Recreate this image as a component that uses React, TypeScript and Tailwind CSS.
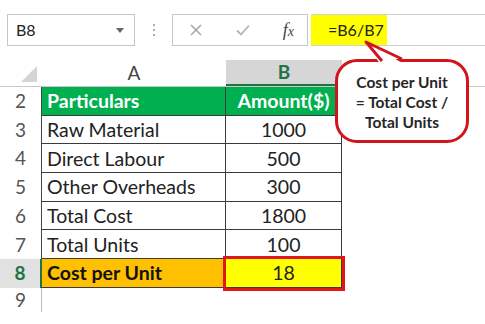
import React from 'react';

const rows = [
  { n: 2, label: 'Particulars', value: 'Amount($)', kind: 'head' },
  { n: 3, label: 'Raw Material', value: '1000', kind: 'body' },
  { n: 4, label: 'Direct Labour', value: '500', kind: 'body' },
  { n: 5, label: 'Other Overheads', value: '300', kind: 'body' },
  { n: 6, label: 'Total Cost', value: '1800', kind: 'body' },
  { n: 7, label: 'Total Units', value: '100', kind: 'body' },
  { n: 8, label: 'Cost per Unit', value: '18', kind: 'result' },
];

function TopBar() {
  return (
    <div className="flex h-[32px] mt-[14px] items-stretch">
      {/* Name box */}
      <div className="ml-[7px] w-[128px] border border-[#c6c6c6] flex items-center justify-between pl-[8px] pr-[10px] text-[16px] text-[#222]">
        <span>B8</span>
        <span className="w-0 h-0 border-l-[4px] border-r-[4px] border-t-[5px] border-l-transparent border-r-transparent border-t-[#666]" />
      </div>
      <div className="w-[37px] flex flex-col items-center justify-center gap-[3px]">
        <span className="w-[2px] h-[2px] bg-[#aaa]" />
        <span className="w-[2px] h-[2px] bg-[#aaa]" />
        <span className="w-[2px] h-[2px] bg-[#aaa]" />
      </div>
      {/* Cancel / enter / fx */}
      <div className="w-[136px] border border-[#c6c6c6] flex items-center pl-[16px] pr-[13px] justify-between">
        <svg width="14" height="14" viewBox="0 0 14 14">
          <path d="M2 2L12 12M12 2L2 12" stroke="#a8a8a8" strokeWidth="1.6" />
        </svg>
        <svg width="16" height="14" viewBox="0 0 16 14">
          <path d="M2 7.5L6 11.5L14 2.5" stroke="#b4b4b4" strokeWidth="1.8" fill="none" />
        </svg>
        <span className="font-['Liberation_Serif'] italic text-[18px] text-[#444] leading-none">
          f<span className="text-[14px]">x</span>
        </span>
      </div>
      {/* Formula input */}
      <div className="flex-1 ml-[3px] border-y border-[#d0d0d0] flex items-stretch">
        <div className="w-[76px] bg-[#ffff00] flex items-center pl-[17px] text-[16px] text-[#222]">=B6/B7</div>
      </div>
    </div>
  );
}

function HeaderRow() {
  return (
    <div className="flex h-[27px] mt-[14px] border-b border-[#c8c8c8]">
      <div className="w-[42px] relative">
        <svg width="16" height="16" viewBox="0 0 16 16" className="absolute right-[5px] bottom-[4px]">
          <polygon points="16,0 16,16 0,16" fill="#d4d4d4" />
        </svg>
      </div>
      <div className="w-[184px] flex items-center justify-center text-[19px] text-[#444]">A</div>
      <div className="w-[116px] bg-[#d6d6d6] border-b-2 border-[#217346] flex items-center justify-center text-[19px] font-bold text-[#217346]">
        B
      </div>
    </div>
  );
}

function DataRow({ n, label, value, kind }: { n: number; label: string; value: string; kind: string }) {
  const isResult = kind === 'result';
  const isHead = kind === 'head';
  return (
    <div className="flex h-[28.7px]">
      <div
        className={
          'w-[42px] flex items-center justify-center text-[19px] ' +
          (isResult ? 'bg-[#e1e1e1] text-[#217346] font-bold border-r-2 border-[#217346]' : 'text-[#555] border-r border-[#444]')
        }
      >
        {n}
      </div>
      <div
        className={
          'w-[184px] flex items-center pl-[5px] text-[19.5px] border-r border-b border-[#3a3a3a] ' +
          (isHead ? 'bg-[#00b050] text-white font-bold' : isResult ? 'bg-[#ffc000] text-[#111] font-bold' : 'text-[#222]')
        }
      >
        {label}
      </div>
      <div
        className={
          'w-[116px] flex items-center justify-center text-[19.5px] border-r border-b border-[#3a3a3a] ' +
          (isHead
            ? 'bg-[#00b050] text-white font-bold'
            : isResult
              ? 'bg-[#ffff00] text-[#222] outline-solid outline-[3px] outline-[#e0161c]'
              : 'text-[#222]')
        }
      >
        {value}
      </div>
    </div>
  );
}

export default function App() {
  return (
    <div className="w-[485px] h-[324px] bg-white relative overflow-hidden font-['Lato',sans-serif]">
      <TopBar />
      <HeaderRow />
      {rows.map(r => (
        <DataRow key={r.n} {...r} />
      ))}
      <div className="flex h-[24px]">
        <div className="w-[42px] flex items-center justify-center text-[19px] text-[#555] border-r border-[#bdbdbd]">9</div>
      </div>

      {/* Callout */}
      <div className="absolute left-[335px] top-[59px] w-[134px] h-[84px] rounded-[22px] border-[3px] border-[#d0161c] bg-white flex flex-col items-center justify-center pt-[2px] text-[15.5px] font-bold leading-[20px] text-[#262626]">
        <span>Cost per Unit</span>
        <span>= Total Cost /</span>
        <span>Total Units</span>
      </div>
      <svg width="50" height="30" viewBox="0 0 50 30" className="absolute left-[360px] top-[38px]">
        <polygon points="6,4 20,26 44,26" fill="white" />
        <polyline points="22,23 6,4 42,21" fill="none" stroke="#d0161c" strokeWidth="3" strokeLinejoin="round" />
      </svg>
    </div>
  );
}
